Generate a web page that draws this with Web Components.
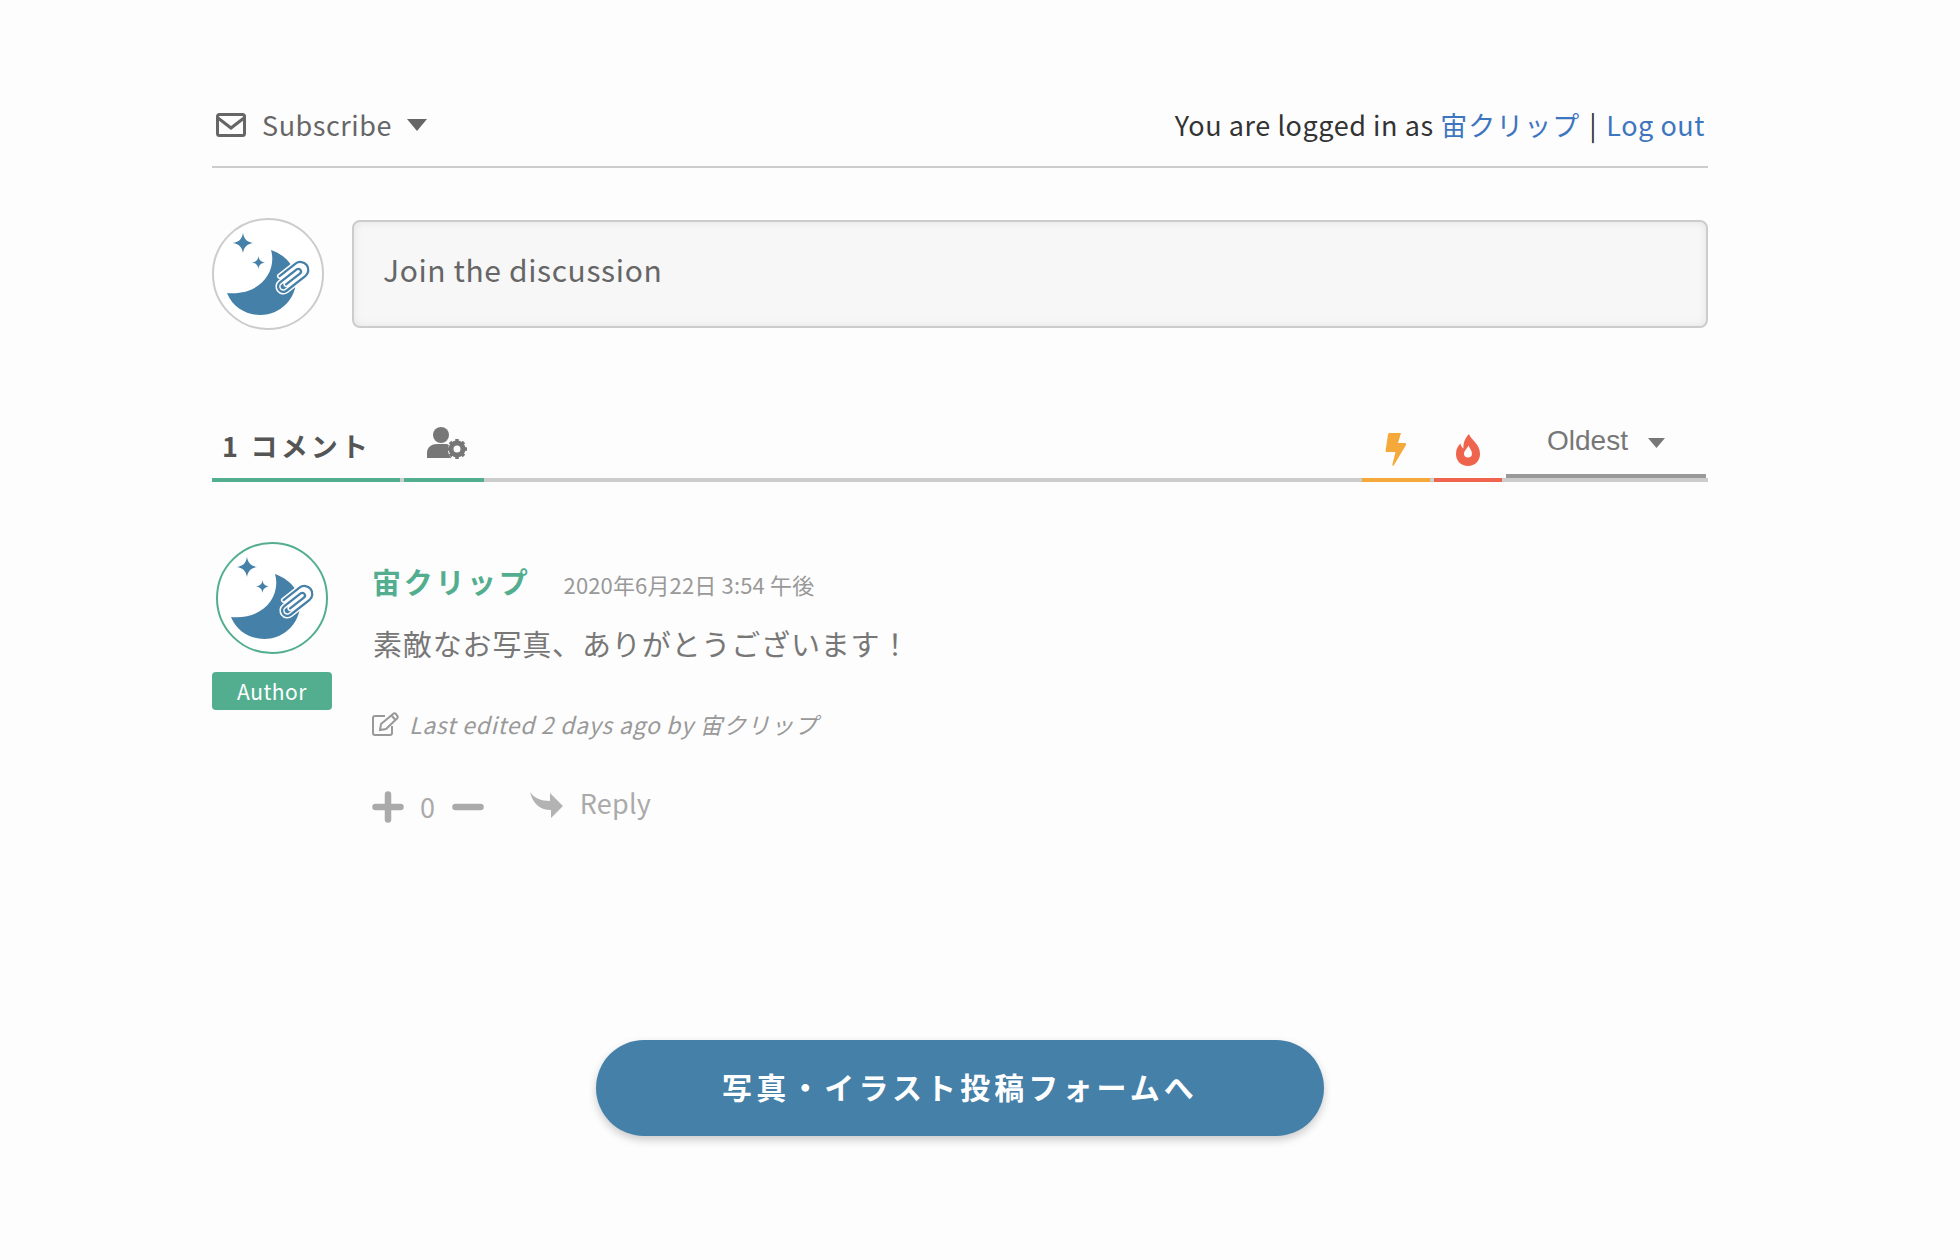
<!DOCTYPE html>
<html lang="ja"><head><meta charset="utf-8"><title>Comments</title>
<style>
html,body{margin:0;background:#fdfdfd}
body{font-family:"Noto Sans CJK JP","Noto Sans",sans-serif;color:#666}
</style></head><body>
<comments-page>
  <sub-bar user="宙クリップ"></sub-bar>
  <reply-box placeholder="Join the discussion"></reply-box>
  <sort-tabs></sort-tabs>
  <comment-item name="宙クリップ" time="2020年6月22日 3:54 午後" edited="Last edited 2 days ago by 宙クリップ">素敵なお写真、ありがとうございます！</comment-item>
  <pill-button>写真・イラスト投稿フォームへ</pill-button>
</comments-page>
<script>
function def(name, css, html){
  customElements.define(name, class extends HTMLElement{
    constructor(){super();this.attachShadow({mode:'open'})}
    connectedCallback(){
      const a=n=>this.getAttribute(n)||'';
      this.shadowRoot.innerHTML='<style>'+css+'</style>'+html(a);
    }
  });
}
def('comments-page',':host{display:block;width:1496px;padding:0 0 124px 212px}',()=>'<slot></slot>');

const clip='M-8 3L12 3A3 3 0 0 0 12 -3L-12 -3A6 6 0 0 0 -12 9L15 9A9 9 0 0 0 15 -9L-8 -9';
def('logo-avatar',':host{display:block;width:112px;height:112px;box-sizing:border-box;border-radius:50%;border:2px solid var(--ring,#ccc);background:#fff;overflow:hidden}svg{display:block;margin:-2px}',()=>`
<svg width="112" height="112" viewBox="0 0 112 112">
<path fill="#4580a8" d="M59 32C65 52 50 78 15 75C21 90 35 97 48 97C70 97 84 79 84 63C84 48 73 37 59 32Z"/>
<path fill="#4580a8" d="M31 15C32 21 35 24 41 25C35 26 32 29 31 35C30 29 27 26 21 25C27 24 30 21 31 15ZM46.500 38C47 42 49 44 53 44.500C49 45 47 47 46.500 51C46 47 44 45 40 44.500C44 44 46 42 46.500 38Z"/>
<g fill="none" stroke-linecap="round" transform="translate(78 60) rotate(-38) scale(.88)">
<path stroke="#fff" stroke-width="6" d="${clip}"/>
<path stroke="#4580a8" stroke-width="2.600" d="${clip}"/>
</g></svg>`);

def('sub-bar',`:host{display:flex;align-items:center;justify-content:space-between;box-sizing:border-box;padding:84px 3px 0 4px;border-bottom:2px solid #ccc;height:168px;font-size:27px;letter-spacing:.55px;line-height:50px}
.l{display:flex;align-items:center;color:#666}.l svg{display:block}.t{margin:0 15px 0 16px}
.r{color:#333}a{color:#3d76bf;text-decoration:none}.j{letter-spacing:1px}.s{margin:0 2.500px}`,a=>`
<div class="l"><svg width="30" height="24" viewBox="0 0 30 24"><rect x="1.500" y="1.500" width="27" height="21" rx="2" fill="none" stroke="#666" stroke-width="3"/><path d="M2 5L15 15L28 5" fill="none" stroke="#666" stroke-width="3"/></svg>
<span class="t">Subscribe</span><svg width="20" height="12" viewBox="0 0 20 12"><path fill="#666" d="M0 0H20L10 12Z"/></svg></div>
<div class="r">You are logged in as <a class="j">${a('user')}</a> <span class="s">|</span> <a>Log out</a></div>`);

def('reply-box',`:host{display:flex;gap:28px;align-items:center;margin-top:50px}
.b{flex:1;height:108px;box-sizing:border-box;border:2px solid #ccc;border-radius:8px;background:#f7f7f7;box-shadow:inset 0 0 10px rgba(0,0,0,.08);padding:25px 29px;font-size:30px;letter-spacing:.62px;line-height:44px;color:#666}`,a=>`
<logo-avatar></logo-avatar><div class="b">${a('placeholder')}</div>`);

def('sort-tabs',`:host{display:flex;height:96px;margin-top:52px;border-bottom:4px solid #ccc;box-sizing:content-box}
.t{position:relative;display:flex;align-items:center;justify-content:center;box-sizing:border-box;height:100px;margin-bottom:-4px;border-bottom:4px solid var(--c,transparent)}
.c{width:188px;margin-right:4px;justify-content:flex-start;padding:31px 0 0 10px;font-weight:700;font-size:27px;letter-spacing:3.2px;color:#555;--c:#52ae8f}
.u{width:80px;--c:#52ae8f;padding:26px 0 0 6px}
.sp{flex:1}
.z{width:68px;margin-right:4px;padding-top:39px}
.o{width:200px;height:96px;margin:0 2px 0 0;border-bottom:4px solid #999;font:28px/1 "Liberation Sans",sans-serif;color:#777;padding-top:26px;gap:20px}
.o span{margin-left:-5px}.o svg{margin:4px -5px 0 0}`,()=>`
<div class="t c">1 コメント</div>
<div class="t u"><svg width="40" height="32" viewBox="0 0 40 32"><circle cx="14" cy="8" r="8" fill="#777"/><path fill="#777" d="M0 31V26C0 20 5 17 10 17H18C20 17 21 17.500 22 18C20 22 21 27 24 30.500V31Z"/><g transform="translate(30 22)"><circle r="6" fill="none" stroke="#777" stroke-width="5"/><g stroke="#777" stroke-width="3.500"><path d="M0-10V-6M0 10V6M-10 0H-6M10 0H6M-7-7L-4.200-4.200M7 7L4.200 4.200M-7 7L-4.200 4.200M7-7L4.200-4.200"/></g></g></svg></div>
<div class="sp"></div>
<div class="t z" style="--c:#f4a938"><svg width="22" height="34" viewBox="0 0 22 34"><path fill="#f5a93b" d="M3 1.500C3 .7 3.700 0 4.500 0H16L13 10H20C21 10 21.500 11 21 12L9 32C8 33.500 7 32.500 7.400 31.500L10.500 19H2C1 19 .5 18.500 .6 17.500Z"/></svg></div>
<div class="t z" style="--c:#ee644d"><svg width="24" height="32" viewBox="0 0 24 32"><path fill="#ee644d" fill-rule="evenodd" d="M13 0C15 6 24 10 24 20C24 27 19 32 12 32C5 32 0 27 0 20C0 15 2 12 4.500 9.500C5 12 6 13.500 7.500 14.500C7 9 9 4 13 0ZM12.500 11.500C11.500 14.500 8 16.500 8 20C8 22.500 10 23.500 12 23.500C14 23.500 16 22.500 16 20C16 16.500 13.500 14.500 12.500 11.500Z"/></svg></div>
<div class="t o"><span>Oldest</span><svg width="17" height="10" viewBox="0 0 17 10"><path fill="#777" d="M0 0H17L8.500 10Z"/></svg></div>`);

def('comment-item',`:host{display:grid;grid-template-columns:120px 1fr;column-gap:40px;margin-top:60px}
.av{display:flex;flex-direction:column;align-items:center;gap:18px}
.badge{width:120px;height:38px;border-radius:4px;background:#52ae8f;color:#fff;font-size:21px;line-height:38px;text-align:center;letter-spacing:.5px}
.m{padding-top:19px}
.h{display:flex;align-items:baseline;gap:33px;height:40px}
.n{font-weight:700;font-size:29px;letter-spacing:2.700px;color:#52ae8f;line-height:40px}
.d{font-size:22px;color:#999;line-height:38px;letter-spacing:.15px}
.b{margin-top:22px;padding-left:1px;font-size:29px;letter-spacing:.85px;line-height:40px;color:#777}
.e{display:flex;align-items:center;gap:10px;margin-top:41px;height:40px;font-size:23px;font-style:italic;color:#999;letter-spacing:.7px}
.v{display:flex;align-items:center;height:40px;margin-top:43px;color:#aaa;font-size:27px;letter-spacing:.8px}
.v .z{margin:-2px 16px 0 16px}.rp{margin:-9px 0 0 17px;letter-spacing:.2px}
svg{display:block}`,a=>`
<div class="av"><logo-avatar style="--ring:#52ae8f"></logo-avatar><div class="badge">Author</div></div>
<div class="m"><div class="h"><span class="n">${a('name')}</span><span class="d">${a('time')}</span></div>
<div class="b"><slot></slot></div>
<div class="e"><svg width="27" height="24" viewBox="0 0 27 24" fill="none" stroke="#999" stroke-width="2"><path d="M13 4H3C2 4 1 5 1 6V21C1 22 2 23 3 23H18C19 23 20 22 20 21V14"/><path d="M9 12L21 2C22 1 23 1 24 2L25 3.500C26 4.500 26 5.500 25 6.500L14 17L8 18Z"/><path d="M19.500 3.500L23.500 8"/></svg><span>${a('edited')}</span></div>
<div class="v"><svg width="32" height="32" viewBox="0 0 32 32"><path stroke="#aaa" stroke-width="6.500" stroke-linecap="round" d="M3.500 16H28.500M16 3.500V28.500"/></svg><span class="z">0</span><svg width="32" height="8" viewBox="0 0 32 8"><path stroke="#aaa" stroke-width="6.500" stroke-linecap="round" d="M3.500 4H28.500"/></svg>
<svg style="margin:-4px 0 0 46px" width="33" height="27" viewBox="0 0 33 27"><path fill="#b3b3b3" d="M0 0C4 6 11 9 20 9V1L33 14L21 26V18C10 18 3 12 0 0Z"/></svg><span class="rp">Reply</span></div>
</div>`);

def('pill-button',`:host{display:flex;justify-content:center;margin-top:213px}
.p{width:728px;height:96px;border-radius:48px;background:#4580a8;color:#fff;font-weight:700;font-size:30px;letter-spacing:4.100px;line-height:92px;text-align:center;box-shadow:0 4px 8px rgba(0,0,0,.2)}`,()=>`<div class="p"><slot></slot></div>`);
</script>
</body></html>
